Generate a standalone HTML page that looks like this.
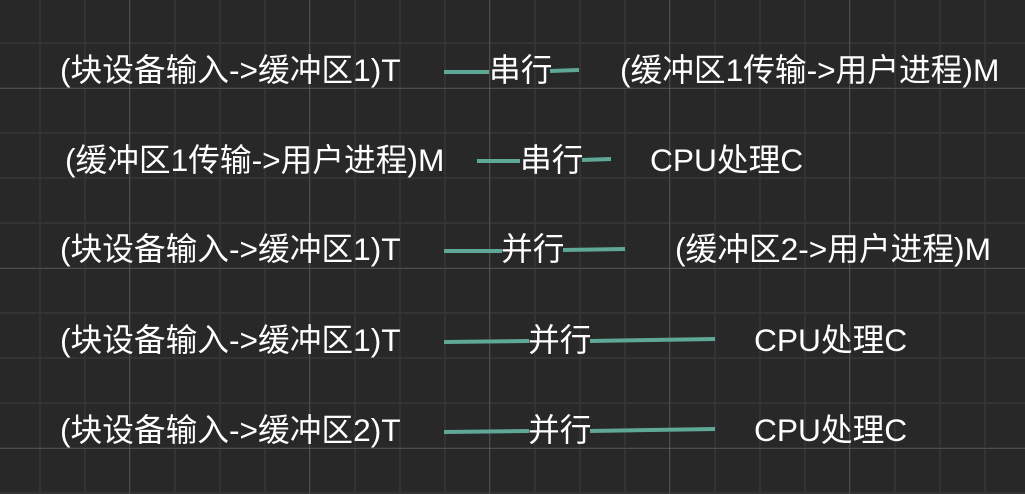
<!DOCTYPE html>
<html><head><meta charset="utf-8"><style>
html,body{margin:0;padding:0}
body{width:1025px;height:494px;overflow:hidden;position:relative;
background-color:#282828;
background-image:
linear-gradient(90deg,rgba(255,255,255,0.12) 1px,transparent 1px),
linear-gradient(0deg,rgba(255,255,255,0.12) 1px,transparent 1px),
linear-gradient(90deg,#333 2px,transparent 2px),
linear-gradient(0deg,#333 2px,transparent 2px);
background-size:180px 180px,180px 180px,45px 45px,45px 45px;
background-position:129px 0,0 89px,39px 0,0 44px;
font-family:"Liberation Sans","Noto Sans CJK SC",sans-serif;color:#fff;font-size:31.7px}
.t{position:absolute;white-space:nowrap;line-height:36px;transform:translateY(-50%)}
svg{position:absolute;left:0;top:0}
</style></head><body>
<svg width="1025" height="494"><g stroke="#5fa898" stroke-width="4">
<line x1="444" y1="72" x2="489" y2="72"/><line x1="550" y1="71" x2="579" y2="70"/>
<line x1="477" y1="161" x2="520" y2="161"/><line x1="582" y1="160" x2="611" y2="159"/>
<line x1="444" y1="251" x2="502" y2="251"/><line x1="563" y1="250" x2="625" y2="249"/>
<line x1="444" y1="342" x2="529" y2="341"/><line x1="590" y1="341" x2="715" y2="339"/>
<line x1="444" y1="432" x2="529" y2="431"/><line x1="590" y1="431" x2="715" y2="429"/>
</g></svg>
<div class="t" style="left:60px;top:70px">(块设备输入-&gt;缓冲区1)T</div>
<div class="t" style="left:489px;top:70px">串行</div>
<div class="t" style="left:620px;top:70px">(缓冲区1传输-&gt;用户进程)M</div>
<div class="t" style="left:65px;top:160px">(缓冲区1传输-&gt;用户进程)M</div>
<div class="t" style="left:520px;top:160px">串行</div>
<div class="t" style="left:650px;top:160px">CPU处理C</div>
<div class="t" style="left:60px;top:249px">(块设备输入-&gt;缓冲区1)T</div>
<div class="t" style="left:501px;top:249px">并行</div>
<div class="t" style="left:675px;top:249px">(缓冲区2-&gt;用户进程)M</div>
<div class="t" style="left:60px;top:340px">(块设备输入-&gt;缓冲区1)T</div>
<div class="t" style="left:528px;top:340px">并行</div>
<div class="t" style="left:754px;top:340px">CPU处理C</div>
<div class="t" style="left:60px;top:430px">(块设备输入-&gt;缓冲区2)T</div>
<div class="t" style="left:528px;top:430px">并行</div>
<div class="t" style="left:754px;top:430px">CPU处理C</div>
</body></html>
